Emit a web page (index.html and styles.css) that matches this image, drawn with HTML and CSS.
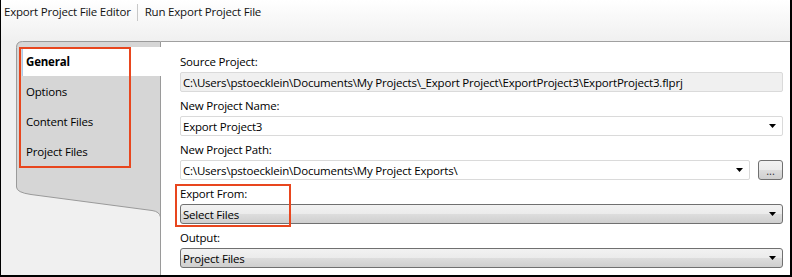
FILE: index.html
```html
<!DOCTYPE html>
<html>
<head>
<meta charset="utf-8">
<link rel="stylesheet" href="styles.css">
</head>
<body>
<div class="frame">
  <div class="toolbar">
    <span class="tb-item">Export Project File Editor</span>
    <span class="tb-sep"></span>
    <span class="tb-item">Run Export Project File</span>
  </div>
  <div class="main">
    <nav class="tabs">
      <div class="tab active">General</div>
      <div class="tab">Options</div>
      <div class="tab">Content Files</div>
      <div class="tab">Project Files</div>
    </nav>
    <section class="panel">
      <div class="group">
        <div class="label">Source Project:</div>
        <div class="field readonly">C:\Users\pstoecklein\Documents\My Projects\_Export Project\ExportProject3\ExportProject3.flprj</div>
      </div>
      <div class="group">
        <div class="label">New Project Name:</div>
        <div class="field edit"><span class="val">Export Project3</span><svg class="arrow" width="7" height="4" viewBox="0 0 7 4"><path d="M0 0H7L3.5 4Z" fill="#000"/></svg></div>
      </div>
      <div class="group">
        <div class="label">New Project Path:</div>
        <div class="row">
          <div class="field edit grow"><span class="val">C:\Users\pstoecklein\Documents\My Project Exports\</span><svg class="arrow" width="7" height="4" viewBox="0 0 7 4"><path d="M0 0H7L3.5 4Z" fill="#000"/></svg></div>
          <div class="browse">...</div>
        </div>
      </div>
      <div class="group">
        <div class="label">Export From:</div>
        <div class="field combo"><span class="val">Select Files</span><svg class="arrow" width="7" height="4" viewBox="0 0 7 4"><path d="M0 0H7L3.5 4Z" fill="#000"/></svg></div>
      </div>
      <div class="group">
        <div class="label">Output:</div>
        <div class="field combo"><span class="val">Project Files</span><svg class="arrow" width="7" height="4" viewBox="0 0 7 4"><path d="M0 0H7L3.5 4Z" fill="#000"/></svg></div>
      </div>
    </section>
  </div>
  <div class="callout callout-tabs"></div>
  <div class="callout callout-export"></div>
</div>
</body>
</html>
```
FILE: styles.css
```css
* { box-sizing: border-box; }
html, body { margin: 0; padding: 0; background: #fff; }
body {
  font-family: "Open Sans", "Noto Sans", "Liberation Sans", sans-serif;
  font-size: 11.5px;
  letter-spacing: -0.2px;
  color: #000;
}
.frame {
  position: relative;
  width: 792px;
  height: 277px;
  border-left: 1px solid #000;
  border-right: 2px solid #000;
  border-bottom: 2px solid #000;
  background: #f0f0f0;
  display: flex;
  flex-direction: column;
  overflow: hidden;
}
.toolbar {
  height: 41px;
  flex: none;
  background: linear-gradient(#ffffff, #f0f0f0);
  display: flex;
  align-items: flex-start;
  padding-left: 3px;
  line-height: 24px;
  color: #111;
}
.tb-sep {
  width: 1px;
  height: 17px;
  margin: 4px 7px 0 6px;
  background: #c8c8c8;
}
.main {
  flex: 1;
  display: flex;
  min-height: 0;
}
.tabs {
  width: 160px;
  flex: none;
  padding-top: 6px;
  background-image: url("data:image/svg+xml,%3Csvg xmlns='http://www.w3.org/2000/svg' width='160' height='234'%3E%3Cpath d='M15.5 146 V6.5 Q15.5 0.5 21.5 0.5 H159.5 V176 Q158.5 170.5 151 169.5 L30 153.5 Q15.5 151.5 15.5 146 Z' fill='%23d6d6d6' stroke='%239a9a9a'/%3E%3Cpath d='M159.5 176 V234' stroke='%239a9a9a' fill='none'/%3E%3C/svg%3E");
  background-repeat: no-repeat;
}
.tab {
  height: 30px;
  line-height: 30px;
  margin-left: 21px;
  width: 139px;
  padding-left: 4px;
}
.tab.active {
  height: 29px;
  line-height: 29px;
  margin-bottom: 1px;
  background: #fff;
  border-left: 1px solid #a9c9ea;
  padding-left: 3px;
  font-weight: bold;
}
.panel {
  flex: 1;
  background: #fff;
  border-top: 1px solid #a0a0a0;
  padding: 12px 7px 0 19px;
  display: flex;
  flex-direction: column;
  gap: 6px;
}
.label {
  line-height: 16px;
  height: 16px;
  margin-bottom: 2px;
}
.field {
  height: 20px;
  display: flex;
  align-items: center;
  padding: 0 6px 0 2px;
  border: 1px solid #dadada;
  border-radius: 2px;
  white-space: nowrap;
  overflow: hidden;
}
.field .val { flex: 1; }
.readonly { background: #f0f0f0; }
.edit { background: #fff; }
.combo {
  border: 1px solid #707070;
  border-radius: 3px;
  background: linear-gradient(#f2f2f2 0%, #ebebeb 50%, #dddddd 50%, #cfcfcf 100%);
}
.arrow { flex: none; }
.row {
  display: flex;
  gap: 8px;
}
.grow { flex: 1; }
.browse {
  width: 25px;
  height: 20px;
  border: 1px solid #707070;
  border-radius: 3px;
  background: linear-gradient(#f2f2f2 0%, #ebebeb 50%, #dddddd 50%, #cfcfcf 100%);
  font-size: 11px;
  line-height: 20px;
  text-align: center;
  color: #333;
  letter-spacing: 0;
}
.callout {
  position: absolute;
  border: 2px solid #e8461e;
  pointer-events: none;
}
.callout-tabs {
  left: 18px;
  top: 47px;
  width: 112px;
  height: 121px;
}
.callout-export {
  left: 174px;
  top: 184px;
  width: 116px;
  height: 43px;
}
```
